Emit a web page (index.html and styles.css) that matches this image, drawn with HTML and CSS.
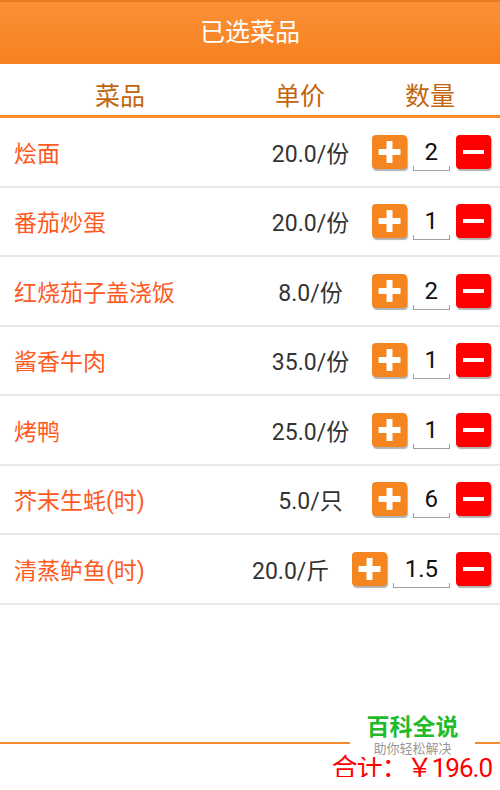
FILE: index.html
```html
<!DOCTYPE html>
<html>
	<head>
		<meta charset="UTF-8">
		<meta name="viewport" content="width=device-width,initial-scale=1" />
		<title>已选菜品</title>
		<link rel="stylesheet" href="styles.css">
	</head>
	<body>
		<div id="page">
			<div class="header">已选菜品</div>
			<div class="cols">
				<span>菜品</span>
				<span>单价</span>
				<span>数量</span>
			</div>
			<ul class="list">
				<li class="row">
					<span class="name">烩面</span>
					<span class="price">20.0/份</span>
					<span class="btn plus"><svg width="35" height="34" viewBox="0 0 35 34"><rect x="14.5" y="6" width="6" height="22" fill="#fff"/><rect x="6.5" y="14" width="22" height="6" fill="#fff"/></svg></span>
					<span class="qty">2</span>
					<span class="btn minus"><svg width="35" height="34" viewBox="0 0 35 34"><rect x="7" y="15" width="21" height="4" fill="#fff"/></svg></span>
				</li>
				<li class="row">
					<span class="name">番茄炒蛋</span>
					<span class="price">20.0/份</span>
					<span class="btn plus"><svg width="35" height="34" viewBox="0 0 35 34"><rect x="14.5" y="6" width="6" height="22" fill="#fff"/><rect x="6.5" y="14" width="22" height="6" fill="#fff"/></svg></span>
					<span class="qty">1</span>
					<span class="btn minus"><svg width="35" height="34" viewBox="0 0 35 34"><rect x="7" y="15" width="21" height="4" fill="#fff"/></svg></span>
				</li>
				<li class="row">
					<span class="name">红烧茄子盖浇饭</span>
					<span class="price">8.0/份</span>
					<span class="btn plus"><svg width="35" height="34" viewBox="0 0 35 34"><rect x="14.5" y="6" width="6" height="22" fill="#fff"/><rect x="6.5" y="14" width="22" height="6" fill="#fff"/></svg></span>
					<span class="qty">2</span>
					<span class="btn minus"><svg width="35" height="34" viewBox="0 0 35 34"><rect x="7" y="15" width="21" height="4" fill="#fff"/></svg></span>
				</li>
				<li class="row">
					<span class="name">酱香牛肉</span>
					<span class="price">35.0/份</span>
					<span class="btn plus"><svg width="35" height="34" viewBox="0 0 35 34"><rect x="14.5" y="6" width="6" height="22" fill="#fff"/><rect x="6.5" y="14" width="22" height="6" fill="#fff"/></svg></span>
					<span class="qty">1</span>
					<span class="btn minus"><svg width="35" height="34" viewBox="0 0 35 34"><rect x="7" y="15" width="21" height="4" fill="#fff"/></svg></span>
				</li>
				<li class="row">
					<span class="name">烤鸭</span>
					<span class="price">25.0/份</span>
					<span class="btn plus"><svg width="35" height="34" viewBox="0 0 35 34"><rect x="14.5" y="6" width="6" height="22" fill="#fff"/><rect x="6.5" y="14" width="22" height="6" fill="#fff"/></svg></span>
					<span class="qty">1</span>
					<span class="btn minus"><svg width="35" height="34" viewBox="0 0 35 34"><rect x="7" y="15" width="21" height="4" fill="#fff"/></svg></span>
				</li>
				<li class="row">
					<span class="name">芥末生蚝(时)</span>
					<span class="price">5.0/只</span>
					<span class="btn plus"><svg width="35" height="34" viewBox="0 0 35 34"><rect x="14.5" y="6" width="6" height="22" fill="#fff"/><rect x="6.5" y="14" width="22" height="6" fill="#fff"/></svg></span>
					<span class="qty">6</span>
					<span class="btn minus"><svg width="35" height="34" viewBox="0 0 35 34"><rect x="7" y="15" width="21" height="4" fill="#fff"/></svg></span>
				</li>
				<li class="row">
					<span class="name">清蒸鲈鱼(时)</span>
					<span class="price">20.0/斤</span>
					<span class="btn plus"><svg width="35" height="34" viewBox="0 0 35 34"><rect x="14.5" y="6" width="6" height="22" fill="#fff"/><rect x="6.5" y="14" width="22" height="6" fill="#fff"/></svg></span>
					<span class="qty">1.5</span>
					<span class="btn minus"><svg width="35" height="34" viewBox="0 0 35 34"><rect x="7" y="15" width="21" height="4" fill="#fff"/></svg></span>
				</li>
			</ul>
			<div class="fill"></div>
			<div class="footer">
				<div class="total">合计：￥196.0</div>
			</div>
			<div class="mark">
				<div class="mark-title">百科全说</div>
				<div class="mark-sub">助你轻松解决</div>
			</div>
		</div>
	</body>
</html>
```

FILE: styles.css
```css
*{margin: 0;padding: 0;box-sizing: border-box;}
li{list-style: none;}
body{background: #fff;font-family: Roboto, "Noto Sans CJK SC", sans-serif;}
#page{width: 500px;height: 790px;position: relative;overflow: hidden;display: flex;flex-direction: column;}

.header{height: 64px;text-align: center;color: #fff;font-size: 25px;background: linear-gradient(#fb9138, #f5811f);border-top: 2px solid #e97c22;line-height: 62px;}

.cols{display: grid;grid-template-columns: 240px 120px 140px;height: 54px;border-bottom: 3px solid #f98a2c;align-items: center;padding-top: 8px;}
.cols span{text-align: center;font-size: 25px;color: #c2650f;}

.row{display: flex;align-items: center;height: 69.5px;border-bottom: 2px solid #e8e8e8;padding: 0 9px 0 14px;}
.name{flex: 1;font-size: 23px;color: #ff5a1e;}
.price{width: 100px;margin-right: 11px;text-align: center;font-size: 23px;color: #333;}
.btn{display: block;width: 35px;height: 34px;border-radius: 4px;box-shadow: 1px 2px 1px rgba(0,0,0,0.3);}
.btn svg{display: block;}
.plus{background: #f5861f;}
.minus{background: #ff0000;}
.qty{position: relative;height: 34px;margin: 4px 6px 0;padding: 0 12px;text-align: center;font-size: 24px;line-height: 30px;color: #111;border-bottom: 1px solid #a0a0a0;}
.qty:before,.qty:after{content: "";position: absolute;bottom: 0;width: 1px;height: 4px;background: #a0a0a0;}
.qty:before{left: 0;}
.qty:after{right: 0;}

.fill{flex: 1;}
.footer{height: 48px;border-top: 2px solid #f7892c;}
.total{height: 33px;overflow: hidden;padding: 11px 8px 0 0;text-align: right;font-size: 26px;line-height: 26px;letter-spacing: -1px;color: #ff0000;}

.mark{position: absolute;left: 350px;top: 713px;width: 125px;height: 44px;background: #fff;text-align: center;}
.mark-title{font-size: 23px;line-height: 26px;font-weight: bold;color: #1fbb2a;padding-top: 2px;}
.mark-sub{font-size: 13px;line-height: 15px;color: #999;}
```
